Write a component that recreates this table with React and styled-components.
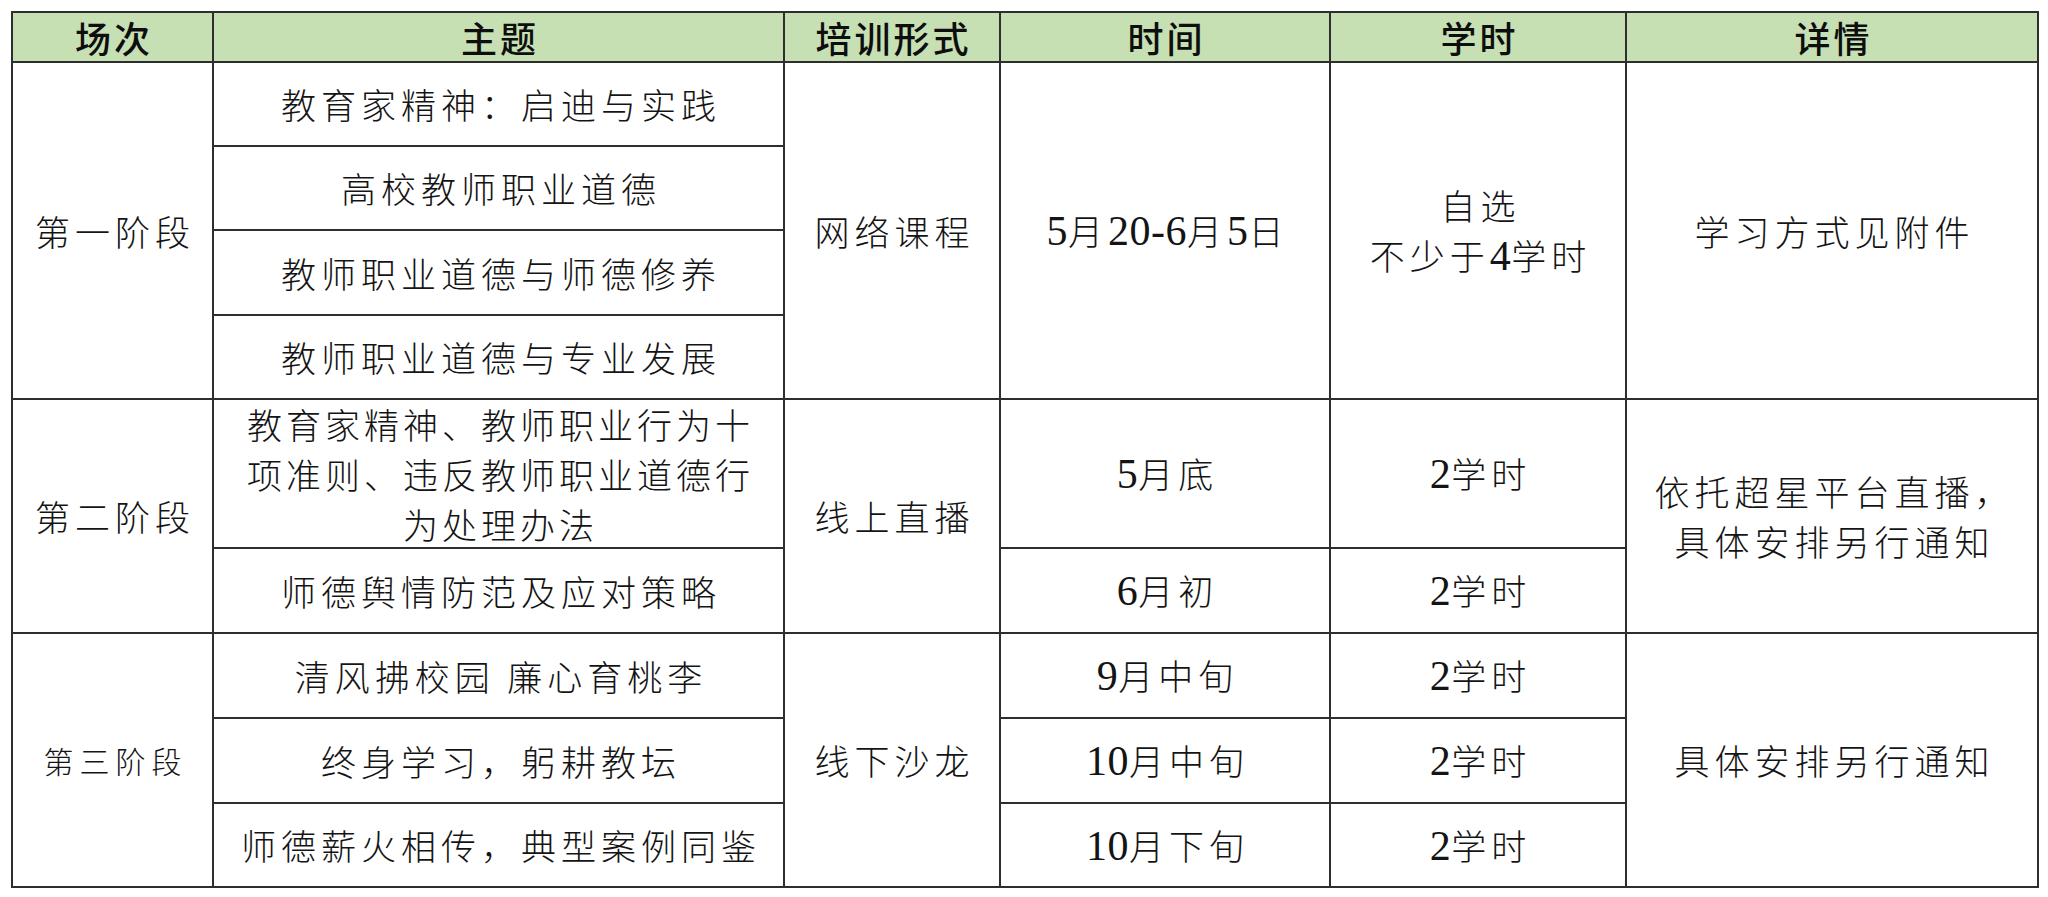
import React from 'react';
import styled, { createGlobalStyle } from 'styled-components';

const Global = createGlobalStyle`
  html, body { margin: 0; padding: 0; background: #ffffff; }
  body { font-family: "Noto Sans CJK SC", sans-serif; color: #111111; }
`;

const Page = styled.div`
  padding: 11px 0 0 11px;
`;

const Table = styled.div`
  display: grid;
  grid-template-columns: 199px 569px 214px 328px 294px 410px;
  grid-template-rows: 48px 82px 82px 83px 82px 147px 83px 83px 83px 82px;
  gap: 2px;
  padding: 2px;
  background: #2e2e2e;
  width: max-content;
`;

const Cell = styled.div`
  grid-row: span ${(p) => p.$span || 1};
  background: #ffffff;
  display: flex;
  flex-direction: column;
  align-items: center;
  justify-content: center;
  text-align: center;
  font-family: "Noto Sans CJK SC", sans-serif;
  font-size: ${(p) => p.$size || 35}px;
  font-weight: 300;
  letter-spacing: ${(p) => p.$ls ?? 5}px;
  padding-left: ${(p) => p.$ls ?? 5}px;
  line-height: 50px;
  white-space: nowrap;
  color: #141414;
`;

const HeadCell = styled(Cell)`
  background: #c6e0b4;
  font-size: 36px;
  font-weight: 500;
  letter-spacing: 3px;
  padding-left: 3px;
  color: #0e0e0e;
`;

const Line = styled.span`
  display: block;
`;

const Num = styled.span`
  font-family: "Liberation Serif", serif;
  font-size: 1.2em;
  letter-spacing: 0.5px;
`;

const T = ({ children }) => (
  <Line>
    {String(children)
      .split(/([\d-]+)/)
      .map((s, i) => (/^[\d-]+$/.test(s) ? <Num key={i}>{s}</Num> : s))}
  </Line>
);

const headers = ['场次', '主题', '培训形式', '时间', '学时', '详情'];

export default function App() {
  return (
    <Page>
      <Global />
      <Table>
        {headers.map((h) => (
          <HeadCell key={h}>{h}</HeadCell>
        ))}

        {/* 第一阶段 */}
        <Cell $span={4}>第一阶段</Cell>
        <Cell>教育家精神：启迪与实践</Cell>
        <Cell $span={4}>网络课程</Cell>
        <Cell $span={4}><T>5月20-6月5日</T></Cell>
        <Cell $span={4}>
          <Line>自选</Line>
          <T>不少于4学时</T>
        </Cell>
        <Cell $span={4}>学习方式见附件</Cell>
        <Cell>高校教师职业道德</Cell>
        <Cell>教师职业道德与师德修养</Cell>
        <Cell>教师职业道德与专业发展</Cell>

        {/* 第二阶段 */}
        <Cell $span={2}>第二阶段</Cell>
        <Cell $ls={4}>
          <Line>教育家精神、教师职业行为十</Line>
          <Line>项准则、违反教师职业道德行</Line>
          <Line>为处理办法</Line>
        </Cell>
        <Cell $span={2}>线上直播</Cell>
        <Cell><T>5月底</T></Cell>
        <Cell><T>2学时</T></Cell>
        <Cell $span={2}>
          <Line>依托超星平台直播，</Line>
          <Line>具体安排另行通知</Line>
        </Cell>
        <Cell>师德舆情防范及应对策略</Cell>
        <Cell><T>6月初</T></Cell>
        <Cell><T>2学时</T></Cell>

        {/* 第三阶段 */}
        <Cell $span={3} $size={30} $ls={6}>第三阶段</Cell>
        <Cell>清风拂校园&nbsp;廉心育桃李</Cell>
        <Cell $span={3}>线下沙龙</Cell>
        <Cell><T>9月中旬</T></Cell>
        <Cell><T>2学时</T></Cell>
        <Cell $span={3}>具体安排另行通知</Cell>
        <Cell>终身学习，躬耕教坛</Cell>
        <Cell><T>10月中旬</T></Cell>
        <Cell><T>2学时</T></Cell>
        <Cell>师德薪火相传，典型案例同鉴</Cell>
        <Cell><T>10月下旬</T></Cell>
        <Cell><T>2学时</T></Cell>
      </Table>
    </Page>
  );
}
